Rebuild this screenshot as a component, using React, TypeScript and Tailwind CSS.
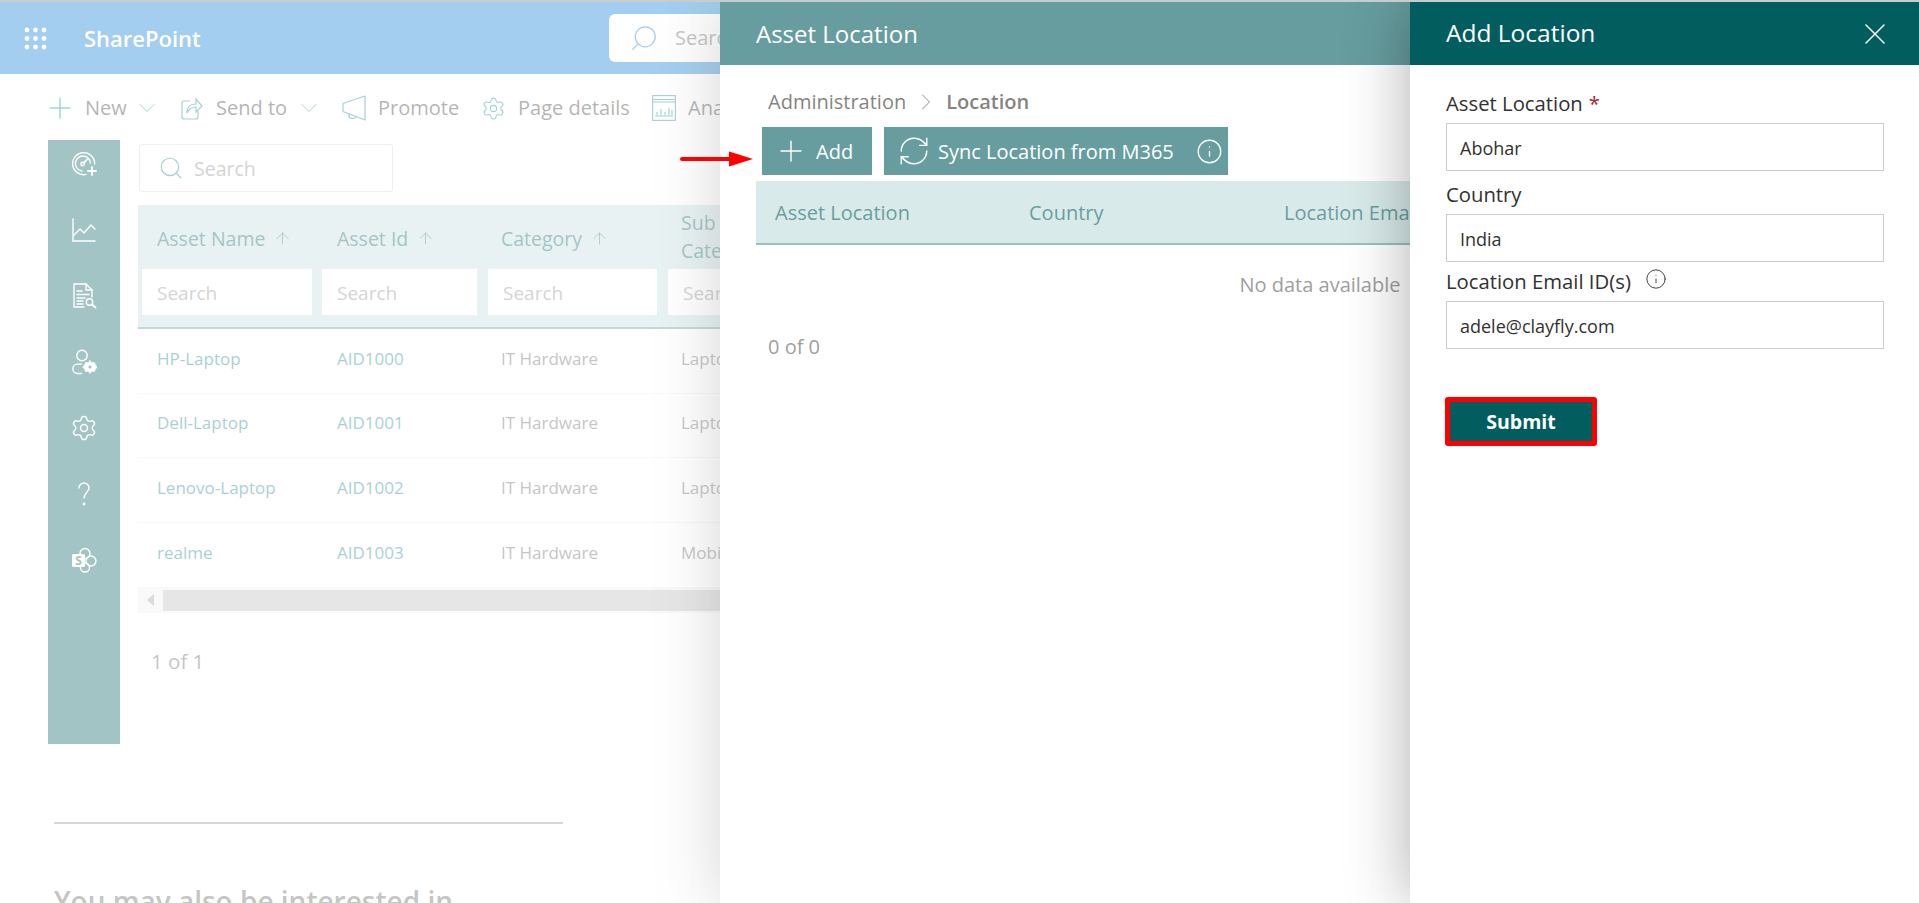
import React from "react";
import { Plus, ChevronDown, ChevronRight, Settings, Search, RefreshCw, Info, X, ArrowUp } from "lucide-react";

const font = { fontFamily: '"Open Sans", "Noto Sans", sans-serif' };

function Waffle() {
  const pts = [3, 11.5, 20];
  return (
    <svg width="23" height="23" viewBox="0 0 23 23" fill="#fff">
      {pts.map((y) => pts.map((x) => <circle key={`${x}-${y}`} cx={x} cy={y} r="2.4" />))}
    </svg>
  );
}

function SendIcon() {
  return (
    <svg width="22" height="26" viewBox="0 0 22 26" fill="none" stroke="#038387" strokeWidth="1.2">
      <path d="M9 6H3a2 2 0 0 0-2 2v14a2 2 0 0 0 2 2h12a2 2 0 0 0 2-2v-6" />
      <path d="M6 18c0-6 4-9 9-9V4l6 7-6 6v-5c-4 0-7 2-9 6z" />
    </svg>
  );
}

function MegaphoneIcon() {
  return (
    <svg width="24" height="26" viewBox="0 0 24 26" fill="none" stroke="#038387" strokeWidth="1.2" strokeLinejoin="round">
      <path d="M1 8.500L23 1v24L1 16.500z" />
      <path d="M7 18.500v2a3 3 0 0 0 3 3h1.500a3 3 0 0 0 2.500-1.500" />
    </svg>
  );
}

function AnalyticsIcon() {
  return (
    <svg width="24" height="26" viewBox="0 0 24 26" fill="none" stroke="#038387" strokeWidth="1.1">
      <rect x="0.6" y="0.6" width="22.8" height="24.8" />
      <path d="M1 7h22M1 4.500h22M5 20v-3M9 20v-6M13 20v-3M17 20v-7M20 20v-5M3 21h18" />
    </svg>
  );
}

const sideProps = { width: 26, height: 26, viewBox: "0 0 26 26", fill: "none", stroke: "#fff", strokeWidth: 1.4, strokeLinecap: "round" as const };

function GaugePlus() {
  return (
    <svg {...sideProps}>
      <path d="M15 23.4A11 11 0 1 1 23.6 13" />
      <path d="M11 20a7.5 7.5 0 1 1 8.4-8" />
      <circle cx="11.5" cy="13" r="1.7" />
      <path d="M13 11.7l3-3.2M21 16v8M17 20h8" strokeWidth="1.8" />
    </svg>
  );
}
function ChartIcon() {
  return (
    <svg {...sideProps}>
      <path d="M2 2v22h22M3 18l6-6 4 4 7-8 4 4" />
    </svg>
  );
}
function DocSearch() {
  return (
    <svg {...sideProps}>
      <path d="M13 24H3V1h12l6 6v7" />
      <path d="M15 1v6h6M6 8h5M6 11.500h12M6 15h8M6 18h6M6 21h6" />
      <circle cx="18.500" cy="19" r="3.200" />
      <path d="M21 21.500l3.500 3" strokeWidth="1.8" />
    </svg>
  );
}
function PersonGear() {
  return (
    <svg {...sideProps}>
      <circle cx="11" cy="6.500" r="5.200" />
      <path d="M10.500 24.500H6.500a4.700 4.700 0 0 1 0-9.400h4" />
      <path d="M19 11.500l1.700 2.300 2.800-.4.900 2.700 2.100 1.900-2.100 1.900-.9 2.700-2.800-.4L19 24.500l-1.700-2.300-2.800.4-.9-2.700-2.100-1.900 2.100-1.900.9-2.700 2.800.4z" fill="#fff" strokeWidth="0.600" />
      <circle cx="19" cy="18" r="1.600" fill="#025d5f" stroke="none" />
    </svg>
  );
}
function SpIcon() {
  return (
    <svg {...sideProps}>
      <circle cx="14" cy="6.500" r="5" />
      <circle cx="20" cy="14" r="5" />
      <circle cx="14" cy="20.500" r="4.500" />
      <rect x="1" y="7" width="13" height="13" rx="1.500" fill="#fff" stroke="none" />
      <text x="7.500" y="17.500" fontSize="12" fontWeight="700" fill="#025d5f" stroke="none" textAnchor="middle" style={font}>S</text>
    </svg>
  );
}

function Cmd({ icon, label, labelW, chevronGap, gap, className = "" }: { icon: React.ReactNode; label: string; labelW: string; chevronGap?: string; gap: string; className?: string }) {
  return (
    <div className={`flex items-center shrink-0 ${className}`}>
      {icon}
      <span className={`${gap} ${labelW} text-[20px] text-[#323130] whitespace-nowrap`}>{label}</span>
      {chevronGap && <ChevronDown size={28} strokeWidth={0.8} className={`text-[#038387] -mr-[7px] ${chevronGap}`} />}
    </div>
  );
}

const rows = [
  ["HP-Laptop", "AID1000", "IT Hardware", "Laptop"],
  ["Dell-Laptop", "AID1001", "IT Hardware", "Laptop"],
  ["Lenovo-Laptop", "AID1002", "IT Hardware", "Laptop"],
  ["realme", "AID1003", "IT Hardware", "Mobile"],
];

function HeadCell({ label }: { label: string }) {
  return (
    <div className="flex items-center gap-[8px] text-[#025d5f] text-[19.500px] font-medium h-[64px] pt-[3px] pl-[19px]">
      <span className="whitespace-nowrap">{label}</span>
      <ArrowUp size={19} strokeWidth={1} />
    </div>
  );
}

function SearchInput({ className }: { className: string }) {
  return (
    <input
      placeholder="Search"
      className={`h-[46px] bg-white pl-[15px] pt-[2px] text-[19px] outline-none placeholder:text-[#8a8886] ${className}`}
    />
  );
}

function Field({ label, value, extra, className }: { label: string; value: string; extra?: React.ReactNode; className: string }) {
  return (
    <div className={className}>
      <div className="flex items-center h-[24px] pt-[1px] text-[20.300px] text-[#323130] whitespace-nowrap">
        <span>{label}</span>
        {extra}
      </div>
      <input
        readOnly
        value={value}
        className="mt-[8px] block w-[438px] h-[48px] border border-[#cccccc] bg-white px-[13px] pt-[2px] text-[18px] text-[#323130] outline-none"
      />
    </div>
  );
}

export default function App() {
  return (
    <div className="w-[1919px] h-[903px] overflow-hidden flex flex-col bg-white" style={font}>
      <div className="h-[2px] bg-[#c9cccc] shrink-0" />
      <div className="relative flex-1 overflow-hidden">
        {/* SharePoint page */}
        <div className="h-full flex flex-col">
          <header className="h-[72px] bg-[#0078d4] flex items-center shrink-0 pl-[24px]">
            <Waffle />
            <span className="ml-[37px] w-[118px] text-white text-[22px] font-semibold">SharePoint</span>
            <div className="ml-[407px] w-[540px] h-[48px] bg-white rounded-[6px] flex items-center pl-[20px] gap-[16px]">
              <Search size={30} strokeWidth={1} className="text-[#0078d4] -scale-x-100" />
              <span className="text-[20px] text-[#605e5c]">Search</span>
            </div>
          </header>
          <div className="h-[66px] shrink-0 flex items-center pl-[50px] pt-[2px]">
            <Cmd icon={<Plus size={34} strokeWidth={1} className="text-[#038387] -m-[7px]" />} label="New" labelW="w-[42px]" gap="ml-[15px]" chevronGap="ml-[6px]" />
            <Cmd className="ml-[27px]" icon={<SendIcon />} label="Send to" labelW="w-[71px]" gap="ml-[13px]" chevronGap="ml-[8px]" />
            <Cmd className="ml-[26px]" icon={<MegaphoneIcon />} label="Promote" labelW="w-[79px]" gap="ml-[12px]" />
            <Cmd className="ml-[25px]" icon={<Settings size={25} strokeWidth={1} className="text-[#038387] -m-[1px]" />} label="Page details" labelW="w-[110px]" gap="ml-[13px]" />
            <Cmd className="ml-[24px]" icon={<AnalyticsIcon />} label="Analytics" labelW="w-[90px]" gap="ml-[12px]" />
          </div>
          <div className="flex pl-[48px] shrink-0">
            <nav className="w-[72px] h-[604px] bg-[#025d5f] flex flex-col items-center pt-[11px] gap-[40px] shrink-0">
              <GaugePlus />
              <ChartIcon />
              <DocSearch />
              <PersonGear />
              <Settings size={28} strokeWidth={1.2} className="text-white -my-[1px]" />
              <svg {...sideProps}>
                <path d="M8 7a5 5 0 0 1 10 0c0 4-5 5-5 10" />
                <circle cx="13" cy="23" r="0.700" fill="#fff" />
              </svg>
              <SpIcon />
            </nav>
            <main className="ml-[18px] w-[1000px]">
              <div className="mt-[4px] ml-[1px] w-[254px] h-[48px] border border-[#d6d6d6] rounded-[3px] flex items-center pl-[18px] gap-[10px]">
                <Search size={26} strokeWidth={1.1} className="text-[#038387]" />
                <span className="text-[19.500px] text-[#8a8886] pt-[1px]">Search</span>
              </div>
              <div className="mt-[13px] bg-[#c0dcdc] border-b-2 border-[#4f9a9c] h-[124px]">
                <div className="grid grid-cols-[180px_164px_180px_1fr]">
                  <HeadCell label="Asset Name" />
                  <HeadCell label="Asset Id" />
                  <HeadCell label="Category" />
                  <div className="pl-[19px] h-[64px] flex flex-col justify-center text-[#025d5f] text-[19.500px] font-medium leading-[28px]">
                    <span>Sub</span>
                    <span>Category</span>
                  </div>
                </div>
                <div className="grid grid-cols-[180px_166px_180px_1fr] pl-[4px]">
                  <SearchInput className="w-[170px]" />
                  <SearchInput className="w-[155px]" />
                  <SearchInput className="w-[169px]" />
                  <SearchInput className="w-[200px]" />
                </div>
              </div>
              {rows.map((r, i) => (
                <div
                  key={r[0]}
                  className={`grid grid-cols-[180px_164px_180px_1fr] h-[64.500px] pb-[5px] items-center text-[17px] ${i < 3 ? "border-b border-[#ebebeb]" : ""}`}
                >
                  <span className="pl-[19px] text-[#038387]">{r[0]}</span>
                  <span className="pl-[19px] text-[#038387]">{r[1]}</span>
                  <span className="pl-[19px] text-[#605e5c]">{r[2]}</span>
                  <span className="pl-[19px] text-[#605e5c]">{r[3]}</span>
                </div>
              ))}
              <div className="h-[26px] bg-[#eeeeee] flex items-center">
                <div className="w-[25px] flex justify-center text-[#9a9a9a]">
                  <span className="w-0 h-0 border-y-[6px] border-y-transparent border-r-[7px] border-r-current" />
                </div>
                <div className="flex-1 h-[21px] bg-[#bababa]" />
              </div>
              <div className="mt-[33px] ml-[13px] text-[20.500px] text-[#605e5c]">1 of 1</div>
            </main>
          </div>
          <div className="ml-[54px] mt-[78px] w-[509px] border-t-2 border-[#8f8f8f] shrink-0" />
          <h2 className="ml-[54px] mt-[56px] text-[28px] font-semibold text-[#605e5c] whitespace-nowrap">You may also be interested in</h2>
        </div>

        <div className="absolute inset-0 bg-white/40" />

        {/* Asset Location panel */}
        <section className="absolute left-[720px] right-0 top-0 bottom-0 bg-white shadow-[0_0_60px_rgba(0,0,0,0.28)]">
          <div className="h-[63px] bg-[#025d5f] flex items-center pl-[36px] text-white text-[24px]">Asset Location</div>
          <div className="flex items-center h-[26px] mt-[24px] pl-[48px] text-[20px] text-[#323130]">
            <span>Administration</span>
            <ChevronRight size={28} strokeWidth={0.8} className="mx-[6px]" />
            <span className="font-semibold">Location</span>
          </div>
          <div className="flex gap-[12px] ml-[42px] mt-[12px]">
            <button className="w-[110px] h-[48px] bg-[#025d5f] text-white flex items-center pl-[19px] text-[20px]">
              <Plus size={34} strokeWidth={1} className="-m-[7px]" />
              <span className="ml-[15px] pt-[2px]">Add</span>
            </button>
            <button className="w-[344px] h-[48px] bg-[#025d5f] text-white flex items-center pl-[18px] text-[20px] whitespace-nowrap">
              <RefreshCw size={34} strokeWidth={1} className="-mx-[5px]" />
              <span className="ml-[12px] w-[259px] text-left pt-[2px]">Sync Location from M365</span>
              <Info size={27} strokeWidth={1.200} className="-ml-[1px]" />
            </button>
          </div>
          <div className="ml-[36px] mr-[35px] mt-[6px]">
            <div className="grid grid-cols-[254px_255px_1fr] h-[64px] items-center bg-[#c0dcdc] border-b-2 border-[#4f9a9c] pt-[2px] text-[20px] font-medium text-[#025d5f]">
              <span className="pl-[19px]">Asset Location</span>
              <span className="pl-[19px]">Country</span>
              <span className="pl-[19px]">Location Email ID(s)</span>
            </div>
            <div className="h-[80px] flex items-center justify-center text-[20px] text-[#605e5c]">No data available</div>
            <div className="mt-[7px] ml-[12px] text-[20px] text-[#605e5c]">0 of 0</div>
          </div>
        </section>

        <div className="absolute inset-0 bg-white/40" />

        {/* Add Location panel */}
        <section className="absolute left-[1410px] right-0 top-0 bottom-0 bg-white shadow-[0_0_60px_rgba(0,0,0,0.32)]">
          <div className="h-[63px] bg-[#025d5f] flex items-center justify-between pl-[36px] pr-[26px] text-white text-[24.500px]">
            <span>Add Location</span>
            <X size={36} strokeWidth={1} />
          </div>
          <div className="pl-[36px]">
            <Field
              className="mt-[26px]"
              label="Asset Location"
              value="Abohar"
              extra={<span className="ml-[6px] text-[#a4262c]">*</span>}
            />
            <Field className="mt-[11px]" label="Country" value="India" />
            <Field
              className="mt-[7px]"
              label="Location Email ID(s)"
              value="adele@clayfly.com"
              extra={<Info size={22} strokeWidth={1} className="ml-[14px] -mt-[6px]" />}
            />
            <button className="mt-[48px] -ml-[1px] w-[152px] h-[49px] bg-[#025d5f] border-[5px] border-[#ff0000] rounded-[3px] text-white text-[19.500px] font-bold">
              Submit
            </button>
          </div>
        </section>

        {/* Annotation arrow */}
        <svg className="absolute left-[678px] top-[147px]" width="78" height="20" viewBox="0 0 78 20" fill="#ff0000">
          <rect x="2" y="8" width="52" height="4" rx="2" />
          <path d="M51 2.500L75 10L51 17.500z" />
        </svg>
      </div>
    </div>
  );
}
